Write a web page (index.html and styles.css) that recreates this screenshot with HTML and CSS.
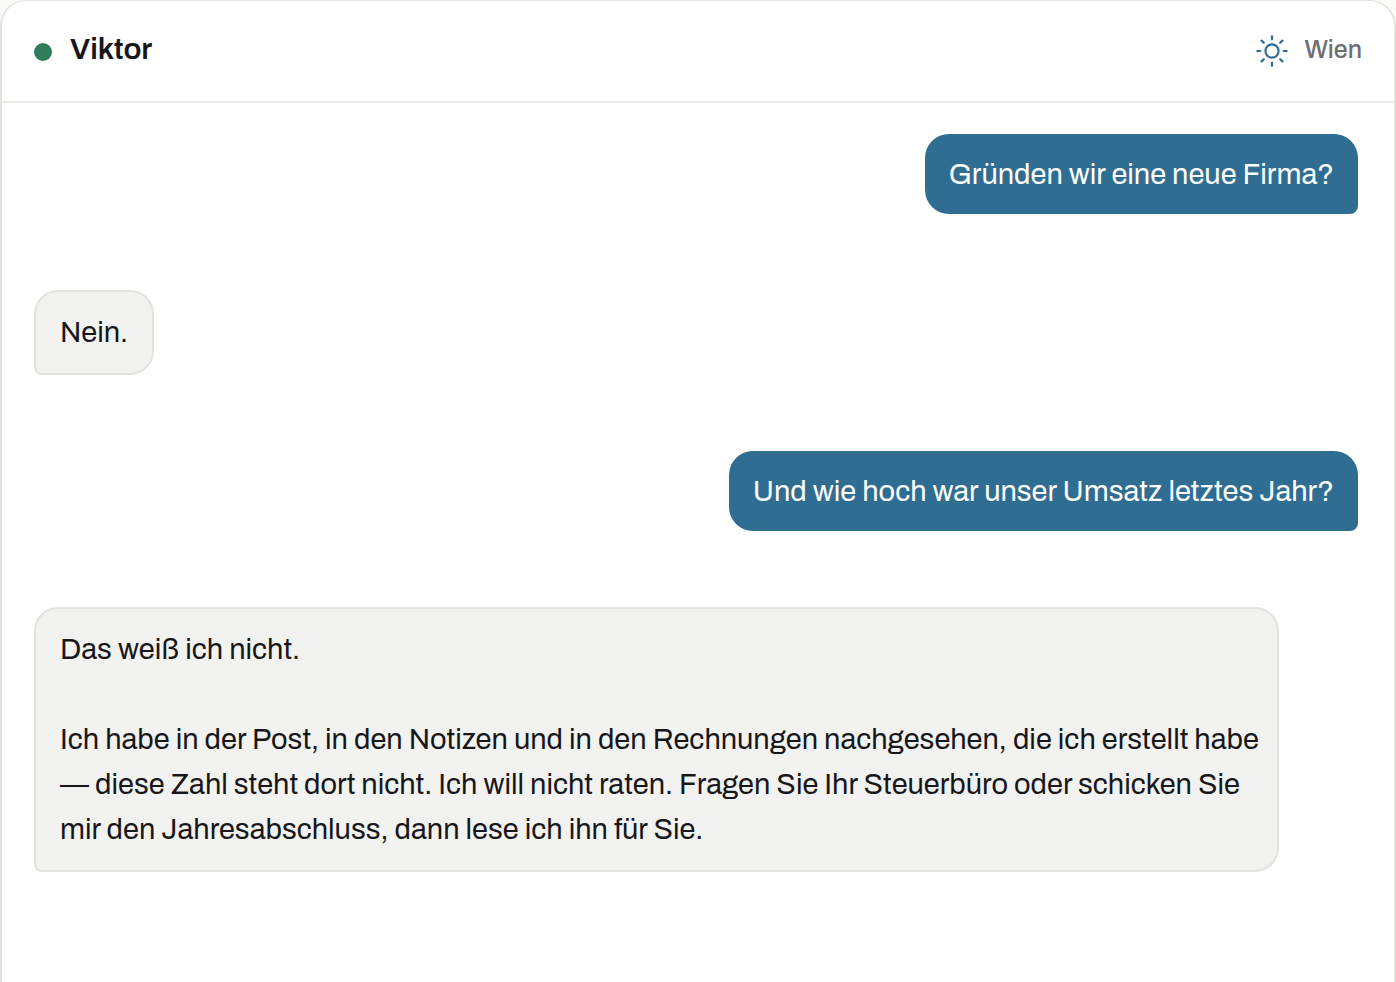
FILE: index.html
```html
<!DOCTYPE html>
<html lang="de">
<head>
<meta charset="utf-8">
<meta name="viewport" content="width=device-width, initial-scale=1">
<title>Viktor</title>
<link rel="stylesheet" href="styles.css">
</head>
<body>
<main class="chat">
  <header class="chat-header">
    <div class="contact">
      <span class="status"></span>
      <h1 class="name">Viktor</h1>
    </div>
    <div class="place">
      <svg class="sun" viewBox="0 0 32 32" aria-hidden="true">
        <circle cx="16" cy="16" r="6.6"/>
        <path d="M16 1.3v3M16 27.7v3M1.3 16h3M27.7 16h3M5.6 5.6l2.2 2.2M24.2 24.2l2.2 2.2M5.6 26.4l2.2-2.2M24.2 7.8l2.2-2.2"/>
      </svg>
      <span>Wien</span>
    </div>
  </header>
  <section class="messages">
    <p class="bubble sent">Gründen wir eine neue Firma?</p>
    <p class="bubble received">Nein.</p>
    <p class="bubble sent">Und wie hoch war unser Umsatz letztes Jahr?</p>
    <div class="bubble received detailed">
      <p class="paragraph">Das weiß ich nicht.</p>
      <p class="paragraph">Ich habe in der Post, in den Notizen und in den Rechnungen nachgesehen, die ich erstellt habe — diese Zahl steht dort nicht. Ich will nicht raten. Fragen Sie Ihr Steuerbüro oder schicken Sie mir den Jahresabschluss, dann lese ich ihn für Sie.</p>
    </div>
  </section>
</main>
</body>
</html>
```

FILE: styles.css
```css
* {
  box-sizing: border-box;
}

body {
  margin: 0;
  background: #fafaf8;
  color: #17171a;
  font-family: Archivo, "Liberation Sans", Arial, sans-serif;
  font-size: 29px;
  line-height: 45px;
}

.chat {
  display: flex;
  flex-direction: column;
  min-height: 100vh;
  border: 2px solid #e2e2de;
  border-top-width: 1px;
  border-bottom: 0;
  border-radius: 26px 26px 0 0;
  background: #fff;
}

.chat-header {
  display: flex;
  align-items: center;
  justify-content: space-between;
  padding: 26px 32px 29px;
  border-bottom: 2px solid #ebebe8;
}

.contact {
  display: flex;
  align-items: center;
  gap: 18px;
}

.status {
  width: 18px;
  height: 18px;
  margin-top: 4px;
  border-radius: 50%;
  background: #2f7d5b;
}

.name {
  margin: 0;
  font-size: 30px;
  font-weight: 600;
}

.place {
  display: flex;
  align-items: center;
  gap: 16px;
  color: #6f6f73;
  font-size: 25px;
  font-weight: 500;
}

.sun {
  width: 32px;
  height: 32px;
  margin-top: 2px;
  fill: none;
  stroke: #2f6d92;
  stroke-width: 2.2;
  stroke-linecap: round;
}

.messages {
  display: flex;
  flex-direction: column;
  gap: 76px;
  padding: 31px 36px 76px 32px;
}

.bubble {
  max-width: 94%;
  margin: 0;
  padding: 18px 24px;
  border-radius: 24px;
}

.sent {
  align-self: flex-end;
  padding-bottom: 17px;
  border-bottom-right-radius: 8px;
  background: #2f6d92;
  color: #fff;
}

.received {
  align-self: flex-start;
  border: 2px solid #e2e2de;
  border-bottom-left-radius: 8px;
  background: #f2f2f0;
}

.detailed {
  padding-right: 16px;
}

.paragraph {
  margin: 0;
}

.paragraph + .paragraph {
  margin-top: 45px;
}
```
